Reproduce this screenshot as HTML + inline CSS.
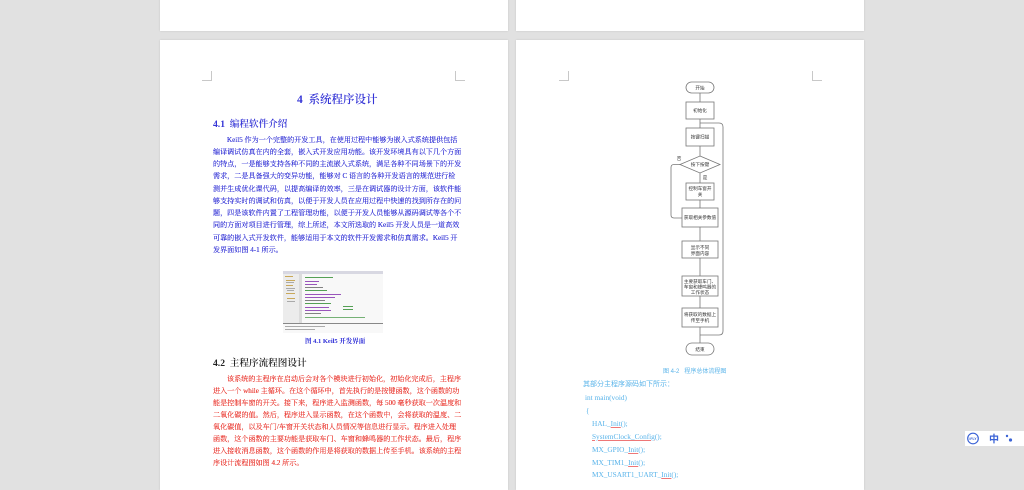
<!DOCTYPE html>
<html><head><meta charset="utf-8"><style>
*{margin:0;padding:0;box-sizing:border-box}
body{width:1024px;height:483px;background:#e1e1e1;position:relative;overflow:hidden;font-family:"Liberation Serif","Noto Serif CJK SC","Noto Sans CJK SC",serif}
.pg{position:absolute;background:#fff;box-shadow:0 0 2px rgba(0,0,0,0.12)}
.ln{position:absolute;left:213px;width:242px;font-size:7.1px;line-height:9px;white-space:nowrap;text-align:justify;text-align-last:justify;text-shadow:0 0 0.3px currentColor}
.b{color:#3535d6}
.r{color:#ea3a32}
.nj{text-align-last:left}
.cm{position:absolute;width:10px;height:10px;border-color:#c8c8c8;border-style:solid;border-width:0}
.code{position:absolute;color:#5ab4ea;font-size:7.3px;line-height:9px;white-space:nowrap}
.code u{text-decoration:underline solid #e77;text-decoration-thickness:0.6px;text-underline-offset:1px}
.h{position:absolute;font-family:'Liberation Serif','Noto Serif CJK SC',serif;white-space:nowrap;font-weight:600}
</style></head><body>
<div class="pg" style="left:160px;top:-2px;width:348px;height:33px"></div>
<div class="pg" style="left:516px;top:-2px;width:348px;height:33px"></div>
<div class="pg" style="left:160px;top:40px;width:348px;height:450px"></div>
<div class="pg" style="left:516px;top:40px;width:348px;height:450px"></div>

<div class="cm" style="left:202px;top:71px;border-right-width:1px;border-bottom-width:1px"></div>
<div class="cm" style="left:455px;top:71px;border-left-width:1px;border-bottom-width:1px"></div>
<div class="cm" style="left:559px;top:71px;border-right-width:1px;border-bottom-width:1px"></div>
<div class="cm" style="left:812px;top:71px;border-left-width:1px;border-bottom-width:1px"></div>

<div class="h" style="left:297px;top:91px;font-size:11.5px;color:#3434d6">4&nbsp; 系统程序设计</div>
<div class="h" style="left:213px;top:116px;font-size:9.6px;color:#3434d6">4.1&nbsp; 编程软件介绍</div>

<div class="ln b" style="top:136px;left:227px;width:228px">Keil5 作为一个完整的开发工具，在使用过程中能够为嵌入式系统提供包括</div>
<div class="ln b" style="top:148px">编译调试仿真在内的全套，嵌入式开发应用功能。该开发环境具有以下几个方面</div>
<div class="ln b" style="top:160px">的特点，一是能够支持各种不同的主流嵌入式系统，满足各种不同场景下的开发</div>
<div class="ln b" style="top:172px">需求，二是具备强大的变异功能，能够对 C 语言的各种开发语言的规范进行检</div>
<div class="ln b" style="top:185px">测并生成优化课代码，以提高编译的效率，三是在调试器的设计方面，该软件能</div>
<div class="ln b" style="top:197px">够支持实时的调试和仿真，以便于开发人员在应用过程中快速的找到所存在的问</div>
<div class="ln b" style="top:209px">题，四是该软件内置了工程管理功能，以便于开发人员能够从源码调试等各个不</div>
<div class="ln b" style="top:221px">同的方面对项目进行管理，综上所述，本文所选取的 Keil5 开发人员是一道高效</div>
<div class="ln b" style="top:234px">可靠的嵌入式开发软件，能够适用于本文的软件开发需求和仿真需求。Keil5 开</div>
<div class="ln b nj" style="top:246px">发界面如图 4-1 所示。</div>

<svg style="position:absolute;left:283px;top:271px" width="100" height="62" viewBox="0 0 100 62">
<rect width="100" height="62" fill="#f8f8f8"/>
<rect x="0" y="0" width="100" height="3" fill="#d8d8e2"/>
<rect x="0" y="3" width="16" height="49" fill="#ececec"/>
<g fill="#c9a85a"><rect x="2" y="5" width="8" height="1"/><rect x="3" y="9" width="9" height="1"/><rect x="3" y="14" width="7" height="1"/><rect x="3" y="22" width="9" height="1"/><rect x="4" y="27" width="8" height="1"/></g>
<g fill="#999"><rect x="3" y="11" width="8" height="0.8"/><rect x="3" y="17" width="9" height="0.8"/><rect x="4" y="19" width="7" height="0.8"/><rect x="4" y="30" width="8" height="0.8"/></g>
<rect x="16" y="3" width="3" height="49" fill="#dcdcdc"/>
<g fill="#55a055"><rect x="22" y="6" width="28" height="1"/><rect x="22" y="19" width="22" height="1"/><rect x="22" y="32" width="26" height="1"/><rect x="60" y="35" width="10" height="1"/><rect x="60" y="38" width="10" height="1"/><rect x="22" y="46" width="60" height="0.8"/></g>
<g fill="#9955bb"><rect x="22" y="10" width="14" height="1"/><rect x="22" y="13" width="12" height="1"/><rect x="22" y="23" width="36" height="1"/><rect x="22" y="26" width="30" height="1"/><rect x="22" y="36" width="24" height="1"/><rect x="22" y="39" width="26" height="1"/></g>
<g fill="#666"><rect x="22" y="16" width="18" height="0.8"/><rect x="22" y="29" width="20" height="0.8"/><rect x="22" y="42" width="16" height="0.8"/></g>
<rect x="0" y="52" width="100" height="1" fill="#888"/>
<g fill="#aaa"><rect x="2" y="55" width="40" height="1"/><rect x="2" y="58" width="30" height="1"/></g>
</svg>
<div style="position:absolute;left:305px;top:336px;font-size:6.5px;font-weight:bold;color:#2f2fd8;white-space:nowrap">图 4.1 Keil5 开发界面</div>

<div class="h" style="left:213px;top:355px;font-size:9.6px;color:#222">4.2&nbsp; 主程序流程图设计</div>
<div class="ln r" style="top:375px;left:227px;width:228px">该系统的主程序在启动后会对各个模块进行初始化，初始化完成后，主程序</div>
<div class="ln r" style="top:387px">进入一个 while 主循环。在这个循环中，首先执行的是按键函数，这个函数的功</div>
<div class="ln r" style="top:399px">能是控制车窗的开关。接下来，程序进入监测函数，每 500 毫秒获取一次温度和</div>
<div class="ln r" style="top:411px">二氧化碳的值。然后，程序进入显示函数，在这个函数中，会将获取的温度、二</div>
<div class="ln r" style="top:423px">氧化碳值，以及车门/车窗开关状态和人员情况等信息进行显示。程序进入处理</div>
<div class="ln r" style="top:435px">函数，这个函数的主要功能是获取车门、车窗和蜂鸣器的工作状态。最后，程序</div>
<div class="ln r" style="top:447px">进入接收消息函数，这个函数的作用是将获取的数据上传至手机。该系统的主程</div>
<div class="ln r nj" style="top:459px">序设计流程图如图 4.2 所示。</div>

<svg style="position:absolute;left:0;top:0" width="1024" height="483" font-family="Liberation Sans,Noto Sans CJK SC,sans-serif" font-size="4.6" fill="#333">
<g stroke="#777" stroke-width="0.8" fill="#fff">
<path d="M700 93V102M700 119V128M700 146V156M700 173V183M700 200V208M700 227V241M700 258V276M700 296V308M700 327V343" fill="none"/>
<path d="M700 123H719Q723 123 723 127V331Q723 335 719 335H700" fill="none"/>
<path d="M680 164.5H674Q671 164.5 671 167.5V215Q671 218 674 218H682" fill="none"/>
<rect x="686" y="82" width="28" height="11" rx="5.5"/>
<rect x="686" y="102" width="28" height="17"/>
<rect x="686" y="128" width="28" height="18"/>
<path d="M700 156L720 164.5L700 173L680 164.5Z"/>
<rect x="686" y="183" width="28" height="17"/>
<rect x="682" y="208" width="36" height="19"/>
<rect x="682" y="241" width="36" height="17"/>
<rect x="682" y="276" width="36" height="20"/>
<rect x="682" y="308" width="36" height="19"/>
<rect x="686" y="343" width="28" height="12" rx="6"/>
</g>
<g text-anchor="middle">
<text x="700" y="89.5">开始</text>
<text x="700" y="112">初始化</text>
<text x="700" y="138.5">按键扫描</text>
<text x="700" y="166">按下按键</text>
<text x="700" y="190">控制车窗开</text><text x="700" y="196">关</text>
<text x="700" y="219">获取相关参数值</text>
<text x="700" y="249">显示不同</text><text x="700" y="255">界面内容</text>
<text x="700" y="283">主要获取车门、</text><text x="700" y="288.5">车窗和蜂鸣器的</text><text x="700" y="294">工作状态</text>
<text x="700" y="316">将获取的数据上</text><text x="700" y="322">传至手机</text>
<text x="700" y="351">结束</text>
<text x="679" y="160">否</text>
<text x="705" y="179">是</text>
</g>
</svg>
<div style="position:absolute;left:663px;top:366px;font-size:6px;color:#5ab4ea;white-space:nowrap;font-family:'Liberation Sans','Noto Sans CJK SC',sans-serif">图 4-2&nbsp;&nbsp; 程序总体流程图</div>

<div class="code" style="left:583px;top:380px;font-family:'Liberation Sans','Noto Sans CJK SC',sans-serif;font-size:7px">其部分主程序源码如下所示：</div>
<div class="code" style="left:585px;top:393px">int main(void)</div>
<div class="code" style="left:586px;top:406px">{</div>
<div class="code" style="left:592px;top:419px">HAL_<u>Init</u>();</div>
<div class="code" style="left:592px;top:432px"><u>SystemClock_Config</u>();</div>
<div class="code" style="left:592px;top:445px">MX_GPIO_<u>Init</u>();</div>
<div class="code" style="left:592px;top:458px">MX_TIM1_<u>Init</u>();</div>
<div class="code" style="left:592px;top:470px">MX_USART1_UART_<u>Init</u>();</div>

<div style="position:absolute;left:965px;top:431px;width:62px;height:15px;background:#fff"></div>
<svg style="position:absolute;left:966px;top:432px" width="58" height="13" viewBox="0 0 58 13">
<circle cx="7" cy="6.5" r="5.3" fill="none" stroke="#3b63d6" stroke-width="1.2"/>
<text x="7" y="8" font-size="3.5" fill="#3b63d6" text-anchor="middle" font-family="Liberation Sans,sans-serif" font-weight="bold">iFLY</text>
<text x="23" y="10.5" font-size="10" fill="#3b63d6" font-weight="bold" font-family="Noto Sans CJK SC,sans-serif">中</text>
<circle cx="41" cy="4" r="1.2" fill="#3b63d6"/>
<circle cx="44.5" cy="8" r="1.6" fill="#3b63d6"/>
</svg>
</body></html>
